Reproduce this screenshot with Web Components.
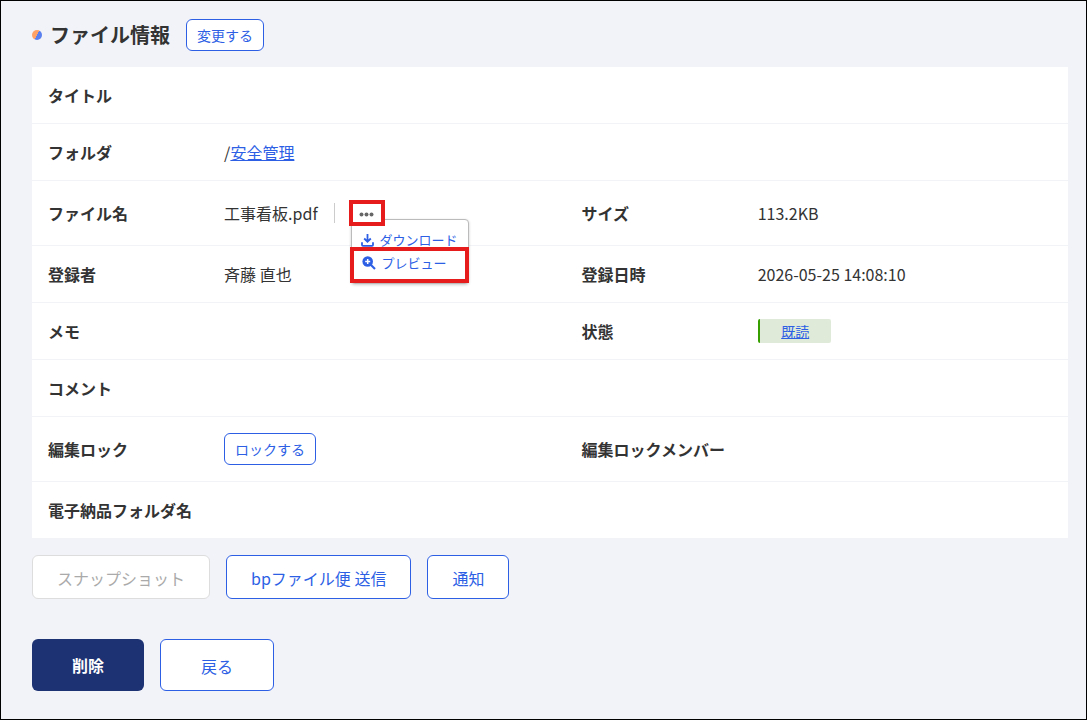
<!DOCTYPE html>
<html lang="ja">
<head>
<meta charset="UTF-8">
<meta name="viewport" content="width=device-width, initial-scale=1">
<title>ファイル情報</title>
<style>
    :root {
        --color-text: #333;
        --color-link: #2d5fe5;
        --color-navy: #1d3273;
        --color-line: #f2f3f7;
        --color-mark: #e61b1b;
    }

    * { box-sizing: border-box; }

    body {
        margin: 0;
        min-height: 100vh;
        border: 1px solid #000;
        background: #f2f3f8;
        color: var(--color-text);
        font: 16px/24px "Noto Sans CJK JP", sans-serif;
    }

    a { color: var(--color-link); }
</style>
</head>
<body>
<file-page>
    <page-heading slot="heading" text="ファイル情報">
        <app-button size="small">変更する</app-button>
    </page-heading>

    <info-table>
        <span slot="folder">/<a href="#folder">安全管理</a></span>
        <file-name slot="filename" name="工事看板.pdf"></file-name>
        <span slot="size">113.2KB</span>
        <span slot="owner">斉藤 直也</span>
        <span slot="date">2026-05-25 14:08:10</span>
        <status-badge slot="status" href="#status">既読</status-badge>
        <app-button slot="lock" size="small">ロックする</app-button>
    </info-table>

    <app-button slot="actions" disabled>スナップショット</app-button>
    <app-button slot="actions">bpファイル便 送信</app-button>
    <app-button slot="actions">通知</app-button>

    <app-button slot="footer" size="large" variant="primary">削除</app-button>
    <app-button slot="footer" size="large">戻る</app-button>
</file-page>

<script>
class FilePage extends HTMLElement {
    constructor() {
        super();
        this.attachShadow({ mode: 'open' });
    }

    connectedCallback() {
        this.shadowRoot.innerHTML = `
        <style>
            :host {
                display: block;
                padding: 18px 18px 28px 31px;
            }

            main {
                display: flex;
                flex-direction: column;
                gap: 16px;
            }

            .buttons {
                display: flex;
                flex-wrap: wrap;
                gap: 16px;
            }

            .footer { margin-top: 24px; }
        </style>
        <main>
            <slot name="heading"></slot>
            <slot></slot>
            <div class="buttons"><slot name="actions"></slot></div>
            <div class="buttons footer"><slot name="footer"></slot></div>
        </main>
        `;
    }
}
customElements.define('file-page', FilePage);

class PageHeading extends HTMLElement {
    constructor() {
        super();
        this.attachShadow({ mode: 'open' });
    }

    connectedCallback() {
        this.shadowRoot.innerHTML = `
        <style>
            :host {
                display: flex;
                align-items: center;
                gap: 16px;
            }

            h1 {
                display: flex;
                align-items: center;
                gap: 8px;
                margin: 0;
                font-size: 20px;
                line-height: 32px;
                font-weight: 700;
            }

            /* two-colour bullet */
            h1::before {
                content: '';
                width: 10px;
                height: 10px;
                border-radius: 50%;
                background: linear-gradient(120deg, #ffa267 50%, #5a7fee 50%);
            }
        </style>
        <h1></h1>
        <slot></slot>
        `;
        this.shadowRoot.querySelector('h1').textContent = this.getAttribute('text') || '';
    }
}
customElements.define('page-heading', PageHeading);

class AppButton extends HTMLElement {
    constructor() {
        super();
        this.attachShadow({ mode: 'open' });
    }

    connectedCallback() {
        const disabled = this.hasAttribute('disabled') ? 'disabled' : '';

        this.shadowRoot.innerHTML = `
        <style>
            :host { display: inline-flex; }

            button {
                box-sizing: border-box;
                height: 44px;
                margin: 0;
                padding: 2px 24px 0;
                border: 1px solid var(--color-link);
                border-radius: 6px;
                background: #fff;
                color: var(--color-link);
                font: inherit;
                white-space: nowrap;
                cursor: pointer;
            }

            button:disabled {
                border-color: #ddd;
                color: #aaa;
                cursor: default;
            }

            :host([size="small"]) button {
                height: 32px;
                padding: 0 10px;
                font-size: 14px;
            }

            :host([size="large"]) button {
                height: 52px;
                padding: 2px 40px 0;
            }

            :host([variant="primary"]) button {
                padding-top: 0;
                border: 0;
                background: var(--color-navy);
                color: #fff;
                font-weight: 700;
            }
        </style>
        <button type="button" ${disabled}><slot></slot></button>
        `;
    }
}
customElements.define('app-button', AppButton);

class InfoTable extends HTMLElement {
    constructor() {
        super();
        this.attachShadow({ mode: 'open' });
    }

    connectedCallback() {
        this.shadowRoot.innerHTML = `
        <style>
            :host { display: block; }

            table {
                width: 100%;
                border-collapse: separate;
                border-spacing: 0;
                table-layout: fixed;
                background: #fff;
            }

            .label { width: 17%; }
            .last { width: 31.5%; }

            th, td {
                box-sizing: border-box;
                height: 57px;
                padding: 0 16px;
                border-bottom: 1px solid var(--color-line);
                text-align: left;
                vertical-align: middle;
            }

            th {
                font-weight: 700;
                white-space: nowrap;
            }

            .tall > * { height: 65px; }
            ::slotted(app-button) { vertical-align: middle; }
        </style>
        <table>
            <colgroup>
                <col class="label"><col><col class="label"><col class="last">
            </colgroup>
            <tbody>
                <tr><th scope="row">タイトル</th><td colspan="3"><slot name="title"></slot></td></tr>
                <tr><th scope="row">フォルダ</th><td colspan="3"><slot name="folder"></slot></td></tr>
                <tr class="tall">
                    <th scope="row">ファイル名</th><td><slot name="filename"></slot></td>
                    <th scope="row">サイズ</th><td><slot name="size"></slot></td>
                </tr>
                <tr>
                    <th scope="row">登録者</th><td><slot name="owner"></slot></td>
                    <th scope="row">登録日時</th><td><slot name="date"></slot></td>
                </tr>
                <tr>
                    <th scope="row">メモ</th><td><slot name="memo"></slot></td>
                    <th scope="row">状態</th><td><slot name="status"></slot></td>
                </tr>
                <tr><th scope="row">コメント</th><td colspan="3"><slot name="comment"></slot></td></tr>
                <tr class="tall">
                    <th scope="row">編集ロック</th><td><slot name="lock"></slot></td>
                    <th scope="row">編集ロックメンバー</th><td><slot name="members"></slot></td>
                </tr>
                <tr><th scope="row">電子納品フォルダ名</th><td colspan="3"><slot name="delivery"></slot></td></tr>
            </tbody>
        </table>
        `;
    }
}
customElements.define('info-table', InfoTable);

class StatusBadge extends HTMLElement {
    constructor() {
        super();
        this.attachShadow({ mode: 'open' });
    }

    connectedCallback() {
        this.shadowRoot.innerHTML = `
        <style>
            :host {
                display: block;
                box-sizing: border-box;
                width: fit-content;
                min-width: 73px;
                border-left: 2px solid #37a000;
                border-radius: 2px;
                background: #dfead8;
                font-size: 14px;
                line-height: 24px;
                text-align: center;
            }

            a { color: var(--color-link); }
        </style>
        <a href="${this.getAttribute('href') || '#'}"><slot></slot></a>
        `;
    }
}
customElements.define('status-badge', StatusBadge);

class FileName extends HTMLElement {
    constructor() {
        super();
        this.attachShadow({ mode: 'open' });
    }

    connectedCallback() {
        this.shadowRoot.innerHTML = `
        <style>
            :host {
                display: flex;
                align-items: center;
                gap: 16px;
            }

            .more {
                position: relative;
                padding-left: 14px;
                border-left: 1px solid #ccc;
                height: 20px;
                display: flex;
                align-items: center;
            }

            .toggle {
                box-sizing: border-box;
                display: flex;
                align-items: center;
                justify-content: center;
                width: 36px;
                height: 26px;
                margin: 0;
                padding: 2px 0 0;
                border: 4px solid var(--color-mark);
                background: #fff;
                position: relative;
                z-index: 2;
                cursor: pointer;
            }

            /* popup menu, opens under the dots */
            ul {
                position: absolute;
                z-index: 1;
                top: 16px;
                left: 16px;
                box-sizing: border-box;
                width: 118px;
                margin: 0;
                padding: 8px 0 0;
                border: 1px solid #bbb;
                border-radius: 4px;
                background: #fff;
                box-shadow: 0 1px 3px rgba(0, 0, 0, .2);
                list-style: none;
            }

            a {
                display: flex;
                align-items: center;
                gap: 6px;
                padding-left: 9px;
                color: var(--color-link);
                font-size: 13px;
                line-height: 24px;
                text-decoration: none;
                white-space: nowrap;
            }

            .marked {
                margin: -5px -1px 0 -2px;
                border: 4px solid var(--color-mark);
                background: #fff;
            }

            .marked a {
                padding: 0 0 4px 8px;
            }

            svg { display: block; flex: none; }
        </style>
        <span class="name"></span>
        <div class="more">
            <button class="toggle" type="button" aria-label="メニュー" aria-expanded="true">
                <svg width="15" height="5" viewBox="0 0 15 5" fill="#666">
                    <circle cx="2.5" cy="2.5" r="2"/><circle cx="7.5" cy="2.5" r="2"/><circle cx="12.5" cy="2.5" r="2"/>
                </svg>
            </button>
            <ul>
                <li><a href="#download">
                    <svg width="13" height="14" viewBox="0 0 13 14" fill="none" stroke="currentColor" stroke-width="1.8">
                        <path d="M6.5 1v7.5M3.2 5.5l3.3 3.3 3.3-3.3M1 9.3v2.6q0 .9.9.9h9.2q.9 0 .9-.9V9.3"/>
                    </svg>ダウンロード</a></li>
                <li class="marked"><a href="#preview">
                    <svg width="14" height="14" viewBox="0 0 14 14">
                        <circle cx="5.7" cy="5.5" r="5.3" fill="currentColor"/>
                        <path d="m9 9 4 4" stroke="currentColor" stroke-width="2.2"/>
                        <path d="M5.7 3v5M3.2 5.5h5" stroke="#fff" stroke-width="1.5"/>
                    </svg>プレビュー</a></li>
            </ul>
        </div>
        `;
        this.shadowRoot.querySelector('.name').textContent = this.getAttribute('name') || '';
    }
}
customElements.define('file-name', FileName);
</script>
</body>
</html>
